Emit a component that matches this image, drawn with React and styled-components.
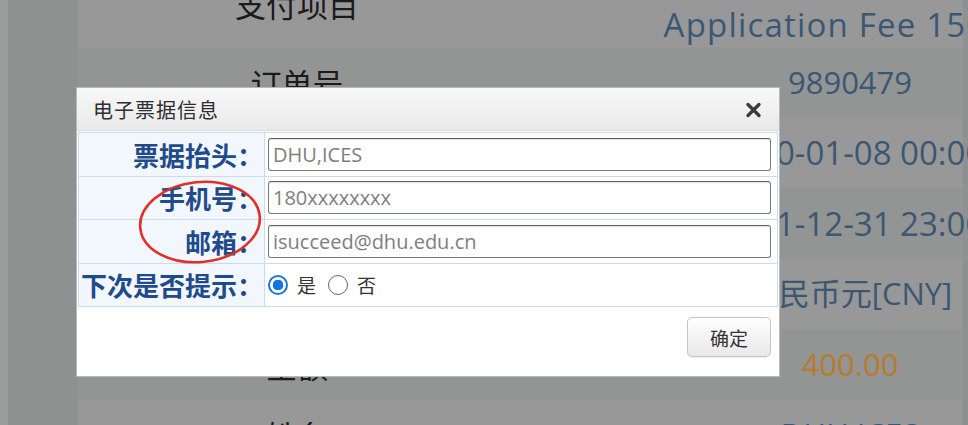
import React from "react"
import styled, { createGlobalStyle } from "styled-components"

const GlobalStyle = createGlobalStyle`
  html, body {
    margin: 0;
    padding: 0;
    width: 968px;
    height: 425px;
    overflow: hidden;
    background: #8f9191;
  }
  * {
    box-sizing: border-box;
  }
`

const orderRows = [
  { label: "支付项目", value: ["ICES ONLINE", "Application Fee 150.00"], tall: true },
  { label: "订单号", value: ["9890479"] },
  { label: "下单时间", value: ["2020-01-08 00:00:00"], date: true },
  { label: "有效期至", value: ["2021-12-31 23:00:00"], date: true },
  { label: "币种", value: ["人民币元[CNY]"] },
  { label: "金额", value: ["400.00"], money: true },
  { label: "姓名", value: ["DHU,ICES"] },
]

const CloseIcon = () => (
  <svg width="17" height="16" viewBox="0 0 17 16">
    <path
      d="M3 2.5 L14 13.5 M14 2.5 L3 13.5"
      stroke="#3b3b3b"
      strokeWidth="3.4"
      strokeLinecap="round"
      fill="none"
    />
  </svg>
)

const App = () => {
  return (
    <>
      <GlobalStyle />
      <Screen>
        <OrderTable>
          {orderRows.map((row, i) => (
            <OrderRow key={row.label} striped={i % 2 === 0} tall={row.tall}>
              <OrderLabel>{row.label}</OrderLabel>
              <OrderValue money={row.money} date={row.date} tall={row.tall}>
                {row.value.map(line => (
                  <ValueLine key={line}>{line}</ValueLine>
                ))}
              </OrderValue>
            </OrderRow>
          ))}
        </OrderTable>

        <Dialog>
          <DialogHead>
            <DialogTitle>电子票据信息</DialogTitle>
            <CloseButton>
              <CloseIcon />
            </CloseButton>
          </DialogHead>
          <DialogBody>
            <FormTable>
              <tbody>
                <tr>
                  <FieldLabel>票据抬头：</FieldLabel>
                  <FieldCell>
                    <TextInput defaultValue="DHU,ICES" />
                  </FieldCell>
                </tr>
                <tr>
                  <FieldLabel>手机号：</FieldLabel>
                  <FieldCell>
                    <TextInput defaultValue="180xxxxxxxx" />
                  </FieldCell>
                </tr>
                <tr>
                  <FieldLabel>邮箱：</FieldLabel>
                  <FieldCell>
                    <TextInput defaultValue="isucceed@dhu.edu.cn" />
                  </FieldCell>
                </tr>
                <tr>
                  <FieldLabel>下次是否提示：</FieldLabel>
                  <FieldCell>
                    <RadioGroup>
                      <RadioOption>
                        <RadioDot checked />
                        是
                      </RadioOption>
                      <RadioOption>
                        <RadioDot />
                        否
                      </RadioOption>
                    </RadioGroup>
                  </FieldCell>
                </tr>
              </tbody>
            </FormTable>
            <DialogFoot>
              <OkButton>确定</OkButton>
            </DialogFoot>
          </DialogBody>
          <Annotation width="130" height="90" viewBox="0 0 130 90">
            <ellipse
              cx="65"
              cy="45"
              rx="60"
              ry="40"
              fill="none"
              stroke="#e0302a"
              strokeWidth="2.6"
              transform="rotate(-6 65 45)"
            />
          </Annotation>
        </Dialog>
      </Screen>
    </>
  )
}

const Screen = styled.div`
  position: relative;
  width: 968px;
  height: 425px;
  overflow: hidden;
  border-left: 8px solid #9a9b9b;
  padding-left: 70px;
  background: #8f9191;
`

const OrderTable = styled.div`
  width: 885px;
  margin-top: -41px;
  display: flex;
  flex-direction: column;
`

const OrderRow = styled.div`
  display: grid;
  grid-template-columns: 438px minmax(0, 1fr);
  align-items: center;
  height: ${p => (p.tall ? "88px" : "70.5px")};
  background: ${p => (p.striped ? "#989898" : "#939494")};
`

const OrderLabel = styled.div`
  text-align: center;
  font-family: "Noto Sans CJK SC", sans-serif;
  font-size: 31px;
  color: #1b1b1b;
`

const OrderValue = styled.div`
  min-width: 0;
  display: flex;
  flex-direction: column;
  align-items: center;
  padding-left: ${p => (p.date ? "271px" : "221px")};
  white-space: nowrap;
  font-family: "Open Sans", "Noto Sans CJK SC", sans-serif;
  font-size: ${p => (p.date || p.tall ? "33px" : "31px")};
  letter-spacing: ${p => (p.tall ? "1.2px" : "0")};
  line-height: 43px;
  color: ${p => (p.money ? "#b87a2d" : "#3a5774")};
`

const ValueLine = styled.span`
  width: max-content;
`

const Dialog = styled.div`
  position: absolute;
  left: 68px;
  top: 87px;
  width: 704px;
  height: 290px;
  background: #fff;
  border: 1px solid #b9b9b9;
  display: flex;
  flex-direction: column;
`

const DialogHead = styled.div`
  height: 43px;
  flex-shrink: 0;
  display: flex;
  align-items: center;
  justify-content: space-between;
  padding: 0 17px 0 16px;
  background: linear-gradient(#f8f8f8, #e9e9e9);
  border-bottom: 1px solid #dcdcdc;
`

const DialogTitle = styled.div`
  font-family: "Noto Sans CJK SC", sans-serif;
  font-size: 20px;
  color: #2e2e2e;
  letter-spacing: 1px;
`

const CloseButton = styled.span`
  display: flex;
  align-items: center;
  margin-top: 2px;
`

const DialogBody = styled.div`
  flex: 1;
  display: flex;
  flex-direction: column;
  padding: 1px 1px 0;
`

const FormTable = styled.table`
  width: 100%;
  border-collapse: collapse;
  border: 1px solid #c9dbee;
`

const FieldLabel = styled.td`
  width: 186px;
  height: 43.5px;
  padding: 0 1px 0 0;
  text-align: right;
  background: #f2f7fd;
  border: 1px solid #c9dbee;
  font-family: "Noto Sans CJK SC", sans-serif;
  font-size: 26px;
  font-weight: 700;
  color: #1f4b8c;
  white-space: nowrap;
`

const FieldCell = styled.td`
  padding: 0 6px 0 3px;
  border: 1px solid #c9dbee;
`

const TextInput = styled.input`
  display: block;
  width: 100%;
  height: 33px;
  padding: 0 4px;
  border: 1px solid #7a7a7a;
  border-top-color: #5f5f5f;
  border-radius: 3px;
  box-shadow: inset 0 1px 1px rgba(0, 0, 0, 0.12);
  font-family: "Open Sans", sans-serif;
  font-size: 20px;
  color: #7e7e7e;
  outline: none;
`

const RadioGroup = styled.div`
  display: flex;
  align-items: center;
  gap: 12px;
`

const RadioOption = styled.label`
  display: flex;
  align-items: center;
  gap: 9px;
  font-family: "Noto Sans CJK SC", sans-serif;
  font-size: 19px;
  color: #333;
`

const RadioDot = styled.span`
  width: 20px;
  height: 20px;
  border-radius: 50%;
  border: ${p => (p.checked ? "2.5px solid #1673e6" : "1.5px solid #666")};
  background: ${p =>
    p.checked
      ? "radial-gradient(circle, #1673e6 0 5px, #fff 5.6px)"
      : "#fff"};
`

const DialogFoot = styled.div`
  flex: 1;
  display: flex;
  justify-content: flex-end;
  align-items: flex-start;
  padding: 10px 7px 0 0;
`

const OkButton = styled.button`
  width: 84px;
  height: 40px;
  border: 1px solid #c6c6c6;
  border-radius: 5px;
  background: linear-gradient(#ffffff, #e8e8e8);
  box-shadow: 0 1px 1px rgba(0, 0, 0, 0.08);
  font-family: "Noto Sans CJK SC", sans-serif;
  font-size: 19px;
  color: #333;
`

const Annotation = styled.svg`
  position: absolute;
  left: 58px;
  top: 89px;
  pointer-events: none;
`

export default App
